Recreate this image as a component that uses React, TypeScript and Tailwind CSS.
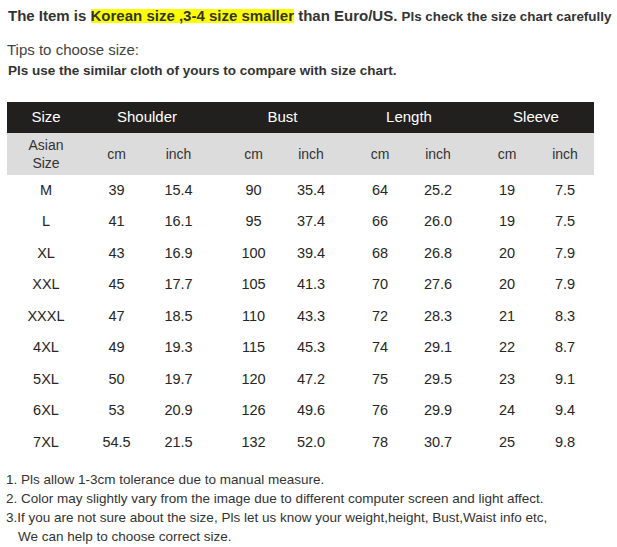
import React from 'react';

const rows: string[][] = [
  ['M', '39', '15.4', '90', '35.4', '64', '25.2', '19', '7.5'],
  ['L', '41', '16.1', '95', '37.4', '66', '26.0', '19', '7.5'],
  ['XL', '43', '16.9', '100', '39.4', '68', '26.8', '20', '7.9'],
  ['XXL', '45', '17.7', '105', '41.3', '70', '27.6', '20', '7.9'],
  ['XXXL', '47', '18.5', '110', '43.3', '72', '28.3', '21', '8.3'],
  ['4XL', '49', '19.3', '115', '45.3', '74', '29.1', '22', '8.7'],
  ['5XL', '50', '19.7', '120', '47.2', '75', '29.5', '23', '9.1'],
  ['6XL', '53', '20.9', '126', '49.6', '76', '29.9', '24', '9.4'],
  ['7XL', '54.5', '21.5', '132', '52.0', '78', '30.7', '25', '9.8'],
];

const gridCols = 'grid grid-cols-[78px_63px_61px_16px_57px_58px_11px_58px_58px_11px_58px_58px]';

// put the empty spacer columns between the measure pairs
function withSpacers(vals: React.ReactNode[]) {
  const out: React.ReactNode[] = [];
  vals.forEach((v, i) => {
    out.push(
      <div key={i} className="flex items-center justify-center">
        {v}
      </div>
    );
    if (i === 2 || i === 4 || i === 6) out.push(<div key={`s${i}`} />);
  });
  return out;
}

export default function App() {
  return (
    <div className="w-[617px] h-[547px] bg-white text-[#333] overflow-hidden" style={{ fontFamily: '"Liberation Sans", Arial, sans-serif' }}>
      {/* Notice */}
      <div className="pl-2 pt-[5px] leading-[21px] font-bold whitespace-nowrap text-[#333]">
        <span className="text-[15px]">The Item is </span>
        <span className="text-[15px] bg-[#ffff00] inline-block leading-[14px] h-[14px]">Korean size ,3-4 size smaller</span>
        <span className="text-[15px]"> than Euro/US. </span>
        <span className="text-[13.4px]">Pls check the size chart carefully</span>
      </div>

      <div className="pl-[7px] mt-[13px] text-[15px] leading-[20px] text-[#444]">Tips to choose size:</div>
      <div className="pl-2 mt-[2px] text-[13.5px] leading-[18px] font-bold text-[#333]">
        Pls use the similar cloth of yours to compare with size chart.
      </div>

      {/* Size chart */}
      <div className="ml-[7px] mt-[22px] w-[587px]">
        <div className={`${gridCols} h-[31px] bg-[#221f1f] text-white text-[15px]`}>
          <div className="flex items-center justify-center">Size</div>
          <div className="col-span-2 flex items-center justify-center">Shoulder</div>
          <div />
          <div className="col-span-2 flex items-center justify-center">Bust</div>
          <div />
          <div className="col-span-2 flex items-center justify-center">Length</div>
          <div />
          <div className="col-span-2 flex items-center justify-center">Sleeve</div>
        </div>
        <div className={`${gridCols} h-[42px] bg-[#dcdcdc] text-[14px] text-[#333]`}>
          {withSpacers([
            <div className="text-center leading-[18px]">Asian<br />Size</div>,
            'cm', 'inch', 'cm', 'inch', 'cm', 'inch', 'cm', 'inch',
          ])}
        </div>
        {rows.map((r) => (
          <div key={r[0]} className={`${gridCols} h-[31.5px] text-[14.5px] text-[#262626]`}>
            {withSpacers(r)}
          </div>
        ))}
      </div>

      {/* Notes */}
      <div className="pl-[6px] mt-[11px] text-[13.5px] leading-[19px] text-[#333]">
        <div>1. Pls allow 1-3cm tolerance due to manual measure.</div>
        <div>2. Color may slightly vary from the image due to different computer screen and light affect.</div>
        <div>3.If you are not sure about the size, Pls let us know your weight,height, Bust,Waist info etc,</div>
        <div className="pl-3">We can help to choose correct size.</div>
      </div>
    </div>
  );
}
